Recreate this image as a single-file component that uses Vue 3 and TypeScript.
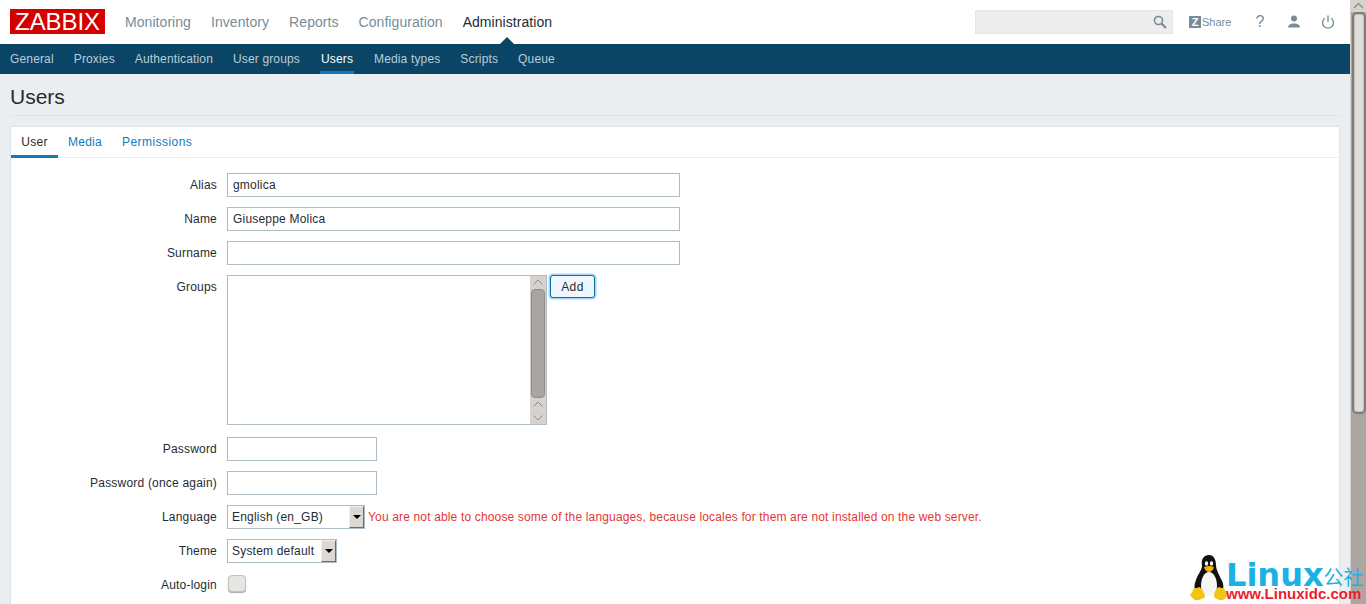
<template>
  <div class="page">
    <div class="main">
      <header class="top-nav">
        <div class="logo">ZABBIX</div>
        <nav class="top-menu">
          <a v-for="item in topMenu" :key="item" :class="{ active: item === 'Administration' }">{{ item }}</a>
        </nav>
        <div class="top-tools">
          <div class="search">
            <svg width="14" height="14" viewBox="0 0 14 14" fill="none" stroke="#768d99">
              <circle cx="5.5" cy="5.5" r="4" stroke-width="1.6" />
              <path d="M8.5 8.5l4.5 4.5" stroke-width="2.2" />
            </svg>
          </div>
          <a class="share"><span class="z-box">Z</span>Share</a>
          <span class="help">?</span>
          <svg class="tool-icon" width="14" height="14" viewBox="0 0 14 14" fill="#768d99">
            <circle cx="7" cy="3.6" r="3" />
            <path d="M1 12.5c0-2.8 3-4 6-4s6 1.200 6 4z" />
          </svg>
          <svg class="tool-icon" width="14" height="14" viewBox="0 0 14 14" fill="none" stroke="#768d99" stroke-width="1.400">
            <path d="M7 .5v6.500" />
            <path d="M3.800 3.200a5.500 5.500 0 1 0 6.400 0" />
          </svg>
        </div>
      </header>

      <nav class="sub-menu">
        <a v-for="item in subMenu" :key="item" :class="{ active: item === 'Users' }">{{ item }}</a>
      </nav>

      <main class="content">
        <h1 class="title">Users</h1>
        <section class="card">
          <div class="tabs">
            <a v-for="tab in tabs" :key="tab" :class="{ active: tab === 'User' }">{{ tab }}</a>
          </div>
          <form class="form">
            <div class="row">
              <label>Alias</label>
              <div class="input wide">gmolica</div>
            </div>
            <div class="row">
              <label>Name</label>
              <div class="input wide">Giuseppe Molica</div>
            </div>
            <div class="row">
              <label>Surname</label>
              <div class="input wide"></div>
            </div>
            <div class="row groups">
              <label>Groups</label>
              <div class="listbox">
                <div class="list-scroll">
                  <svg width="16" height="13" viewBox="0 0 16 13" fill="none" stroke="#8f8b86"><path d="M3.500 8.500l4.500-4.500 4.500 4.500" /></svg>
                  <div class="list-thumb"></div>
                  <svg width="16" height="13" viewBox="0 0 16 13" fill="none" stroke="#8f8b86"><path d="M3.500 8.500l4.500-4.500 4.500 4.500" /></svg>
                  <svg width="16" height="13" viewBox="0 0 16 13" fill="none" stroke="#8f8b86"><path d="M3.500 4.500l4.500 4.500 4.500-4.500" /></svg>
                </div>
              </div>
              <button type="button" class="add-btn">Add</button>
            </div>
            <div class="row">
              <label>Password</label>
              <div class="input narrow"></div>
            </div>
            <div class="row">
              <label>Password (once again)</label>
              <div class="input narrow"></div>
            </div>
            <div class="row">
              <label>Language</label>
              <div class="select lang">
                <span>English (en_GB)</span>
                <i class="select-btn"></i>
              </div>
              <span class="locale-error">You are not able to choose some of the languages, because locales for them are not installed on the web server.</span>
            </div>
            <div class="row">
              <label>Theme</label>
              <div class="select theme">
                <span>System default</span>
                <i class="select-btn"></i>
              </div>
            </div>
            <div class="row">
              <label>Auto-login</label>
              <div class="checkbox"></div>
            </div>
          </form>
        </section>
      </main>
    </div>

    <aside class="scrollbar">
      <div class="scroll-up">
        <svg width="15" height="12" viewBox="0 0 15 12" fill="none" stroke="#8f8b86" stroke-width="1.300"><path d="M3 8l4.500-4.500 4.500 4.500" /></svg>
      </div>
      <div class="thumb"></div>
    </aside>

    <div class="watermark">
      <svg class="tux" width="38" height="46" viewBox="0 0 38 46">
        <path d="M19 0C13 0 11 5 12 11C12 15 8 19 6 25C4 30 4 33 6 37L32 37C34 33 34 29 31 24C29 19 26 15 26 10C26 5 24 0 19 0Z" fill="#111" />
        <path d="M19 17C14 17 11 24 11 31C11 37 14 41 19 41C24 41 27 37 27 31C27 24 24 17 19 17Z" fill="#f6f6f6" />
        <ellipse cx="16.500" cy="8.500" rx="1.600" ry="2.200" fill="#fff" />
        <ellipse cx="21.500" cy="8.500" rx="1.600" ry="2.200" fill="#fff" />
        <path d="M14 12.500C16 10.500 22 10.500 24 12.500C23 15 21 17 19 17C17 17 15 15 14 12.500Z" fill="#f2b20f" />
        <path d="M9 32C12 33 15 39 15 42C12 44 8 46 5 45C3 44 2 42 0 40C2 38 3 35 4 33C6 33 8 33 9 32Z" fill="#f3c316" />
        <path d="M29 32C26 33 24 38 24 42C27 44 30 46 33 45C35 44 36 42 38 40C36 38 35 35 34 33C32 33 30 33 29 32Z" fill="#f3c316" />
      </svg>
      <div class="wm-text">
        <div class="wm-top"><b>Linux</b><span>公社</span></div>
        <div class="wm-url">www.Linuxidc.com</div>
      </div>
    </div>
  </div>
</template>

<script setup lang="ts">
const topMenu: string[] = ['Monitoring', 'Inventory', 'Reports', 'Configuration', 'Administration']
const subMenu: string[] = ['General', 'Proxies', 'Authentication', 'User groups', 'Users', 'Media types', 'Scripts', 'Queue']
const tabs: string[] = ['User', 'Media', 'Permissions']
</script>

<style>
html, body {
  margin: 0;
  height: 100%;
  overflow: hidden;
}
</style>

<style scoped>
.page {
  position: relative;
  display: flex;
  width: 1366px;
  height: 604px;
  overflow: hidden;
  font-family: "Liberation Sans", Arial, sans-serif;
  font-size: 12px;
  letter-spacing: 0.2px;
  color: #1f2c33;
  background: #fff;
}

.main {
  width: 1350px;
  flex: none;
  display: flex;
  flex-direction: column;
}

.top-nav {
  height: 44px;
  flex: none;
  display: flex;
  align-items: center;
  padding: 0 10px;
  box-sizing: border-box;
}

.logo {
  width: 95px;
  height: 25px;
  margin-top: -1px;
  background: #d40000;
  color: #fff;
  font-size: 24px;
  line-height: 25px;
  letter-spacing: -0.1px;
  text-align: center;
}

.top-menu {
  display: flex;
  gap: 20px;
  margin-left: 20px;
  font-size: 14px;
  letter-spacing: 0.06px;
  color: #768d99;
}

.top-menu a.active {
  position: relative;
  color: #1f2c33;
}

.top-menu a.active::after {
  content: "";
  position: absolute;
  left: 50%;
  bottom: -14px;
  margin-left: -7px;
  border: 7px solid transparent;
  border-top: 0;
  border-bottom-color: #0b4566;
}

.top-tools {
  display: flex;
  align-items: center;
  margin-left: auto;
  color: #768d99;
}

.search {
  width: 198px;
  height: 24px;
  box-sizing: border-box;
  border: 1px solid #e6e6e6;
  background: #ededed;
  display: flex;
  align-items: center;
  justify-content: flex-end;
  padding-right: 5px;
}

.share {
  display: flex;
  align-items: center;
  margin-left: 16px;
  font-size: 11px;
  letter-spacing: 0;
  width: 44px;
}

.z-box {
  width: 12px;
  height: 12px;
  margin-right: 1px;
  background: #768d99;
  color: #fff;
  font-size: 11px;
  font-weight: bold;
  line-height: 12px;
  text-align: center;
}

.help {
  margin-left: 22px;
  width: 10px;
  font-size: 16px;
  letter-spacing: 0;
  text-align: center;
}

.tool-icon {
  margin-left: 22px;
}

.tool-icon:last-child {
  margin-left: 20px;
  margin-right: 5px;
}

.sub-menu {
  height: 30px;
  flex: none;
  display: flex;
  gap: 20px;
  padding: 0 10px;
  background: #0b4566;
  color: #b9cdd8;
  letter-spacing: 0.15px;
}

.sub-menu a {
  line-height: 30px;
  box-sizing: border-box;
}

.sub-menu a.active {
  min-width: 34px;
  text-align: center;
  color: #fff;
  border-bottom: 3px solid #0f7bbf;
}

.content {
  flex: 1;
  background: #ebeef0;
  padding: 0 10px;
  min-height: 0;
}

.title {
  margin: 0;
  height: 42px;
  box-sizing: border-box;
  border-bottom: 1px solid #dfe4e7;
  font-size: 21px;
  font-weight: normal;
  line-height: 46px;
  letter-spacing: 0;
  color: #1f2c33;
}

.card {
  margin-top: 10px;
  background: #fff;
  border: 1px solid #dfe4e7;
  border-bottom: 0;
  height: 480px;
}

.tabs {
  display: flex;
  height: 31px;
  box-sizing: border-box;
  border-bottom: 1px solid #ebeef0;
  letter-spacing: 0.25px;
}

.tabs a {
  padding: 0 10px;
  line-height: 30px;
  color: #0f7bbf;
  box-sizing: border-box;
  height: 31px;
}

.tabs a:first-child {
  min-width: 47px;
  text-align: center;
}

.tabs a:last-child {
  letter-spacing: 0.45px;
}

.tabs a.active {
  color: #1f2c33;
  border-bottom: 3px solid #0f7bbf;
}

.form {
  display: flex;
  flex-direction: column;
  gap: 10px;
  padding-top: 15px;
}

.row {
  display: flex;
  align-items: flex-start;
}

.row.groups {
  margin-bottom: 2px;
}

.row label {
  width: 206px;
  flex: none;
  margin-right: 10px;
  text-align: right;
  line-height: 24px;
}

.input {
  height: 24px;
  box-sizing: border-box;
  border: 1px solid #acbbc4;
  padding: 0 5px;
  line-height: 22px;
}

.wide {
  width: 453px;
}

.narrow {
  width: 150px;
}

.listbox {
  width: 320px;
  height: 150px;
  box-sizing: border-box;
  border: 1px solid #acbbc4;
  display: flex;
  justify-content: flex-end;
}

.list-scroll {
  width: 16px;
  background: #d6d2ce;
  display: flex;
  flex-direction: column;
  align-items: center;
}

.list-thumb {
  width: 14px;
  flex: 1;
  box-sizing: border-box;
  background: #aba5a1;
  border: 1px solid #8f8b86;
  border-radius: 4px;
}

.add-btn {
  width: 45px;
  height: 23px;
  margin-left: 3px;
  padding: 0;
  box-sizing: border-box;
  border: 1px solid #0b6ea8;
  border-radius: 3px;
  box-shadow: 0 0 0 1.5px #a9d4f2;
  background: #edf7fd;
  color: #1f2c33;
  font: inherit;
  letter-spacing: 0.4px;
}

.select {
  height: 24px;
  box-sizing: border-box;
  border: 1px solid #acbbc4;
  display: flex;
  align-items: center;
  justify-content: space-between;
  padding-left: 4px;
}

.lang {
  width: 138px;
}

.theme {
  width: 110px;
}

.select-btn {
  position: relative;
  width: 15px;
  height: 22px;
  box-sizing: border-box;
  background: #dcd9d5;
  border-top: 1px solid #f2f0ee;
  border-left: 1px solid #f2f0ee;
  border-right: 1px solid #6e6b68;
  border-bottom: 1px solid #6e6b68;
}

.select-btn::after {
  content: "";
  position: absolute;
  left: 3px;
  top: 8px;
  border: 4px solid transparent;
  border-bottom: 0;
  border-top-color: #000;
}

.locale-error {
  margin-left: 3px;
  line-height: 24px;
  color: #e33734;
  letter-spacing: 0.155px;
  white-space: nowrap;
}

.checkbox {
  width: 16px;
  height: 15px;
  margin: 2px 0 0 1px;
  background: #e8e6e3;
  border: 1px solid #c3c0bc;
  border-radius: 4px;
  box-shadow: 0 1px 1px #a9a6a2;
}

.scrollbar {
  width: 16px;
  flex: none;
  box-sizing: border-box;
  border-left: 1px solid #d6d2ce;
  background: #aca6a2;
  display: flex;
  flex-direction: column;
  align-items: center;
}

.scroll-up {
  width: 15px;
  height: 12px;
  background: #d6d2ce;
}

.scroll-up svg {
  display: block;
}

.thumb {
  width: 14px;
  height: 402px;
  box-sizing: border-box;
  background: #e0dddA;
  border: 2px solid #7f7b77;
  border-radius: 5px;
  box-shadow: inset 0 0 0 1px #c2bebb;
}

.watermark {
  position: absolute;
  left: 1190px;
  bottom: 3px;
  display: flex;
  align-items: flex-end;
}

.wm-text {
  margin-left: -2px;
}

.wm-top {
  height: 30px;
  display: flex;
  align-items: center;
  letter-spacing: 0;
  color: #1ab1e4;
}

.wm-top b {
  font-family: "DejaVu Sans", sans-serif;
  font-size: 32px;
  line-height: 30px;
  padding-top: 5px;
}

.wm-top span {
  font-family: "Noto Sans CJK SC", sans-serif;
  font-size: 20px;
  line-height: 24px;
  padding-top: 10px;
}

.wm-url {
  font-size: 15px;
  font-weight: bold;
  letter-spacing: 0;
  line-height: 14px;
  color: #ee1c2e;
}
</style>
